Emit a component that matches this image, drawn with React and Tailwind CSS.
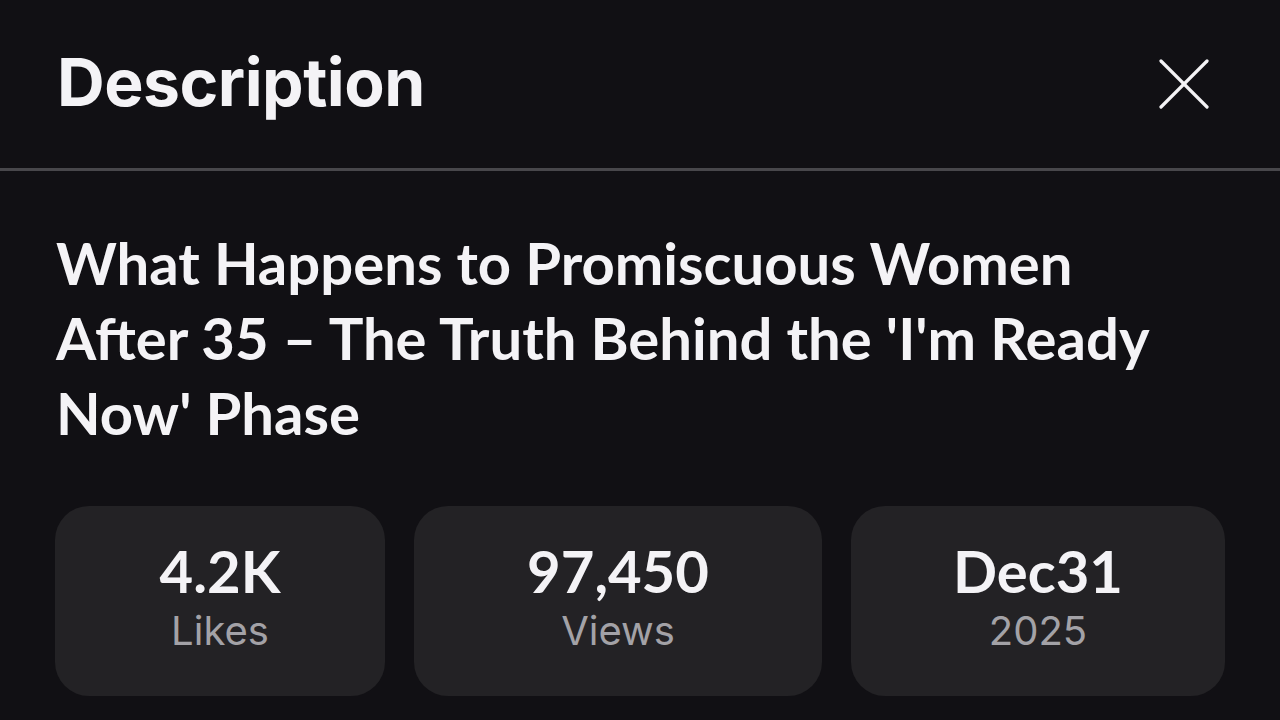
export default function App() {
  const stats = [
    { value: '4.2K', label: 'Likes', w: 'w-[330px]' },
    { value: '97,450', label: 'Views', w: 'w-[408px]' },
    { value: 'Dec31', label: '2025', w: 'w-[374px]' },
  ];

  return (
    <div className="w-[1280px] h-[720px] overflow-hidden bg-[#111014] text-[#f4f3f6]">
      <div className="flex items-center justify-between h-[168px] pl-[57px] pr-[70px]">
        <h1 className="text-[66px] font-bold tracking-[-0.5px] font-['Inter',sans-serif] pb-[3px]">
          Description
        </h1>
        <button className="w-[52px] h-[52px] flex items-center justify-center">
          <svg width="50" height="50" viewBox="0 0 50 50" fill="none" stroke="#f4f3f6" strokeWidth="3.2" strokeLinecap="round">
            <path d="M2 2 L48 48" />
            <path d="M48 2 L2 48" />
          </svg>
        </button>
      </div>
      <div className="h-[3px] bg-[#48474b]" />

      <div className="pl-[56px] pr-[70px] pt-[54px]">
        <h2 className="text-[58px] leading-[75px] font-bold font-['Lato',sans-serif]">
          What Happens to Promiscuous Women After 35 – The Truth Behind the 'I'm Ready Now' Phase
        </h2>
      </div>

      <div className="flex gap-[29px] pl-[55px] pt-[56px]">
        {stats.map((s) => (
          <div
            key={s.value}
            className={`${s.w} h-[190px] rounded-[34px] bg-[#232225] flex flex-col items-center pt-[29px]`}
          >
            <div className="text-[58px] leading-[72px] font-bold font-['Lato',sans-serif]">{s.value}</div>
            <div className="text-[40px] leading-[48px] text-[#a3a2a7] font-['Inter',sans-serif]">{s.label}</div>
          </div>
        ))}
      </div>
    </div>
  );
}
